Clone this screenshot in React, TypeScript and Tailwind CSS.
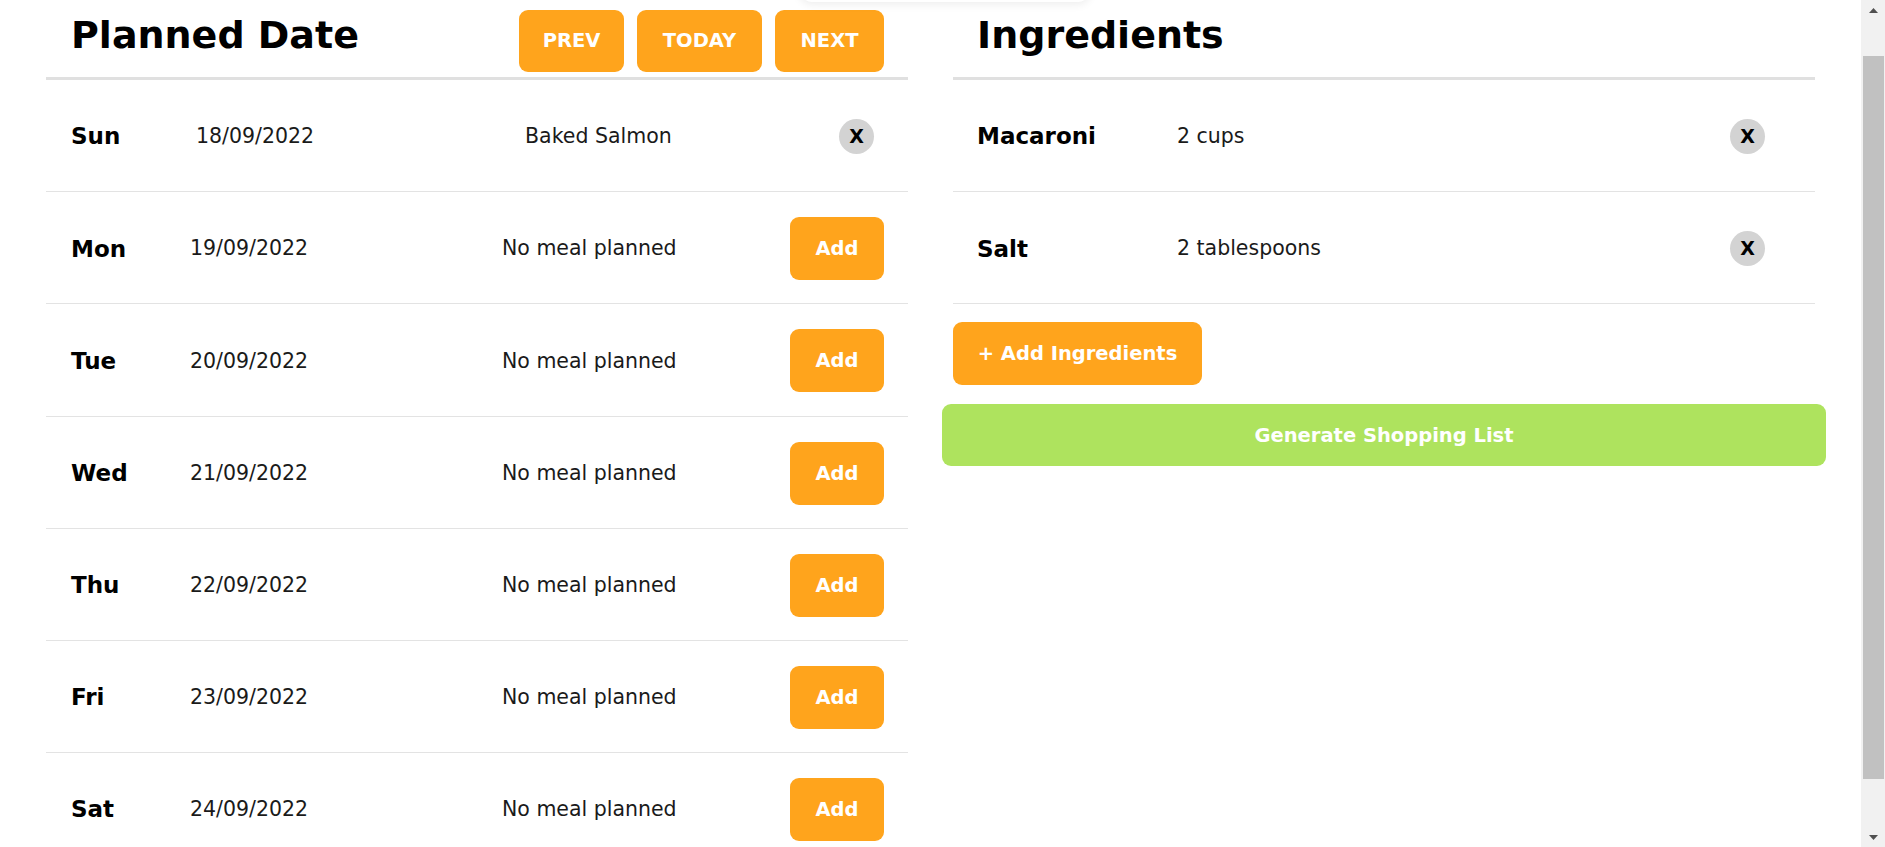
import React from "react";

const days = [
  { d: "Sun", date: "18/09/2022", meal: "Baked Salmon", planned: true },
  { d: "Mon", date: "19/09/2022", meal: "No meal planned", planned: false },
  { d: "Tue", date: "20/09/2022", meal: "No meal planned", planned: false },
  { d: "Wed", date: "21/09/2022", meal: "No meal planned", planned: false },
  { d: "Thu", date: "22/09/2022", meal: "No meal planned", planned: false },
  { d: "Fri", date: "23/09/2022", meal: "No meal planned", planned: false },
  { d: "Sat", date: "24/09/2022", meal: "No meal planned", planned: false },
];

const ingredients = [
  { name: "Macaroni", qty: "2 cups" },
  { name: "Salt", qty: "2 tablespoons" },
];

function XButton({ className }: { className?: string }) {
  return (
    <button
      className={
        "flex h-[35px] w-[35px] items-center justify-center rounded-full bg-[#d3d3d3] text-[19px] font-bold leading-none text-black " +
        (className ?? "")
      }
    >
      X
    </button>
  );
}

function OrangeButton({ children, className }: { children: React.ReactNode; className?: string }) {
  return (
    <button
      className={
        "flex items-center justify-center rounded-[9px] bg-[#ffa41c] text-[19.5px] font-bold text-white " +
        (className ?? "")
      }
    >
      {children}
    </button>
  );
}

export default function App() {
  return (
    <div
      className="relative flex h-[847px] w-full overflow-hidden bg-white text-black"
      style={{ fontFamily: '"DejaVu Sans", Verdana, sans-serif' }}
    >
      {/* faint shadow of an element cut off above the viewport */}
      <div className="absolute left-[800px] top-[-30px] h-[32px] w-[290px] rounded-b-xl bg-white shadow-[0_2px_10px_rgba(0,0,0,0.08)]" />

      <main className="grid flex-1 grid-cols-2 gap-[23px] px-[35px]">
        {/* Left column */}
        <section className="flex flex-col">
          <div className="mx-[11px] flex h-[80px] shrink-0 items-start justify-between border-b-[3px] border-[#e0e0e0] pl-[25px] pr-[24px]">
            <h1 className="mt-[16px] text-[38px] font-bold leading-[38px]">Planned Date</h1>
            <div className="mt-[10px] flex gap-[13px]">
              <OrangeButton className="h-[62px] w-[105px]">PREV</OrangeButton>
              <OrangeButton className="h-[62px] w-[125px]">TODAY</OrangeButton>
              <OrangeButton className="h-[62px] w-[109px]">NEXT</OrangeButton>
            </div>
          </div>
          {days.map((r) => (
            <div
              key={r.d}
              className="mx-[11px] flex h-[112.2px] shrink-0 items-center border-b border-[#e3e3e3] pl-[25px] pr-[24px] pt-[2px]"
            >
              <div className="w-[119px] text-[23px] font-bold">{r.d}</div>
              <div className={"w-[312px] text-[20.5px] text-[#1a1a1a] " + (r.planned ? "pl-[6px]" : "")}>{r.date}</div>
              <div className={"flex-1 text-[20.5px] text-[#1a1a1a] " + (r.planned ? "pl-[23px]" : "")}>{r.meal}</div>
              {r.planned ? (
                <XButton className="mr-[10px]" />
              ) : (
                <OrangeButton className="h-[63px] w-[94px]">Add</OrangeButton>
              )}
            </div>
          ))}
        </section>

        {/* Right column */}
        <section className="flex flex-col">
          <div className="mx-[11px] flex h-[80px] shrink-0 items-start border-b-[3px] border-[#e0e0e0] pl-[24px]">
            <h1 className="mt-[16px] text-[38px] font-bold leading-[38px]">Ingredients</h1>
          </div>
          {ingredients.map((i) => (
            <div
              key={i.name}
              className="mx-[11px] flex h-[112.2px] shrink-0 items-center border-b border-[#e3e3e3] pl-[24px] pr-[50px] pt-[2px]"
            >
              <div className="w-[200px] text-[23px] font-bold">{i.name}</div>
              <div className="flex-1 text-[20.5px] text-[#1a1a1a]">{i.qty}</div>
              <XButton />
            </div>
          ))}
          <div className="mx-[11px] mt-[18px]">
            <OrangeButton className="h-[63px] w-[249px]">+ Add Ingredients</OrangeButton>
          </div>
          <button className="mt-[19px] flex h-[62px] w-full items-center justify-center rounded-[9px] bg-[#aee35e] text-[19.5px] font-bold text-white">
            Generate Shopping List
          </button>
        </section>
      </main>

      {/* Scrollbar */}
      <div className="flex w-[24px] shrink-0 flex-col items-center bg-[#f1f1f1]">
        <div className="flex h-[20px] items-center justify-center">
          <svg width="9" height="5" viewBox="0 0 9 5">
            <path d="M4.5 0 L9 5 L0 5 Z" fill="#505050" />
          </svg>
        </div>
        <div className="mt-[36px] h-[723px] w-[21px] bg-[#c1c1c1]" />
        <div className="flex flex-1 items-end justify-center pb-[7px]">
          <svg width="9" height="5" viewBox="0 0 9 5">
            <path d="M0 0 L9 0 L4.5 5 Z" fill="#505050" />
          </svg>
        </div>
      </div>
    </div>
  );
}
